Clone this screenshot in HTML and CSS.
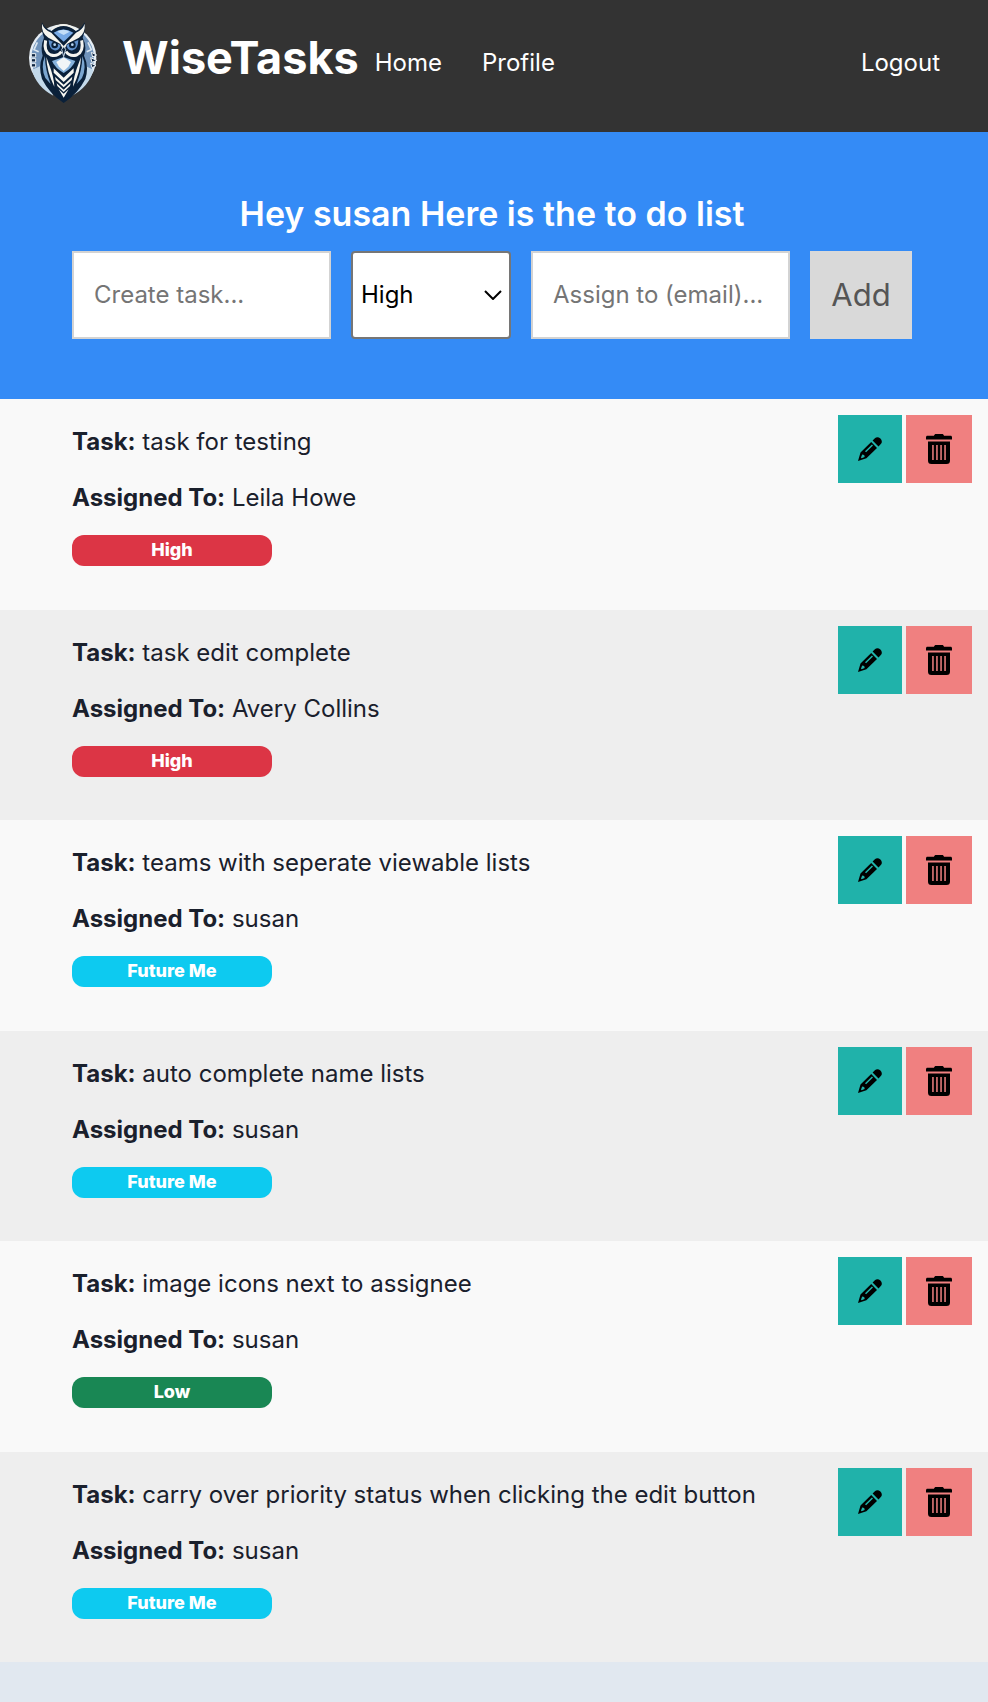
FILE: index.html
```html
<!DOCTYPE html>
<html lang="en">
<head>
<meta charset="utf-8">
<title>WiseTasks</title>
<link rel="stylesheet" href="styles.css">
</head>
<body>
<svg class="sprite" aria-hidden="true">
  <symbol id="pencil" viewBox="0 0 24 24">
    <path fill-rule="evenodd" d="M14.600 3.600 16.900 1.300C18.300-.2 20.600-.2 22.400 1.600 24.200 3.400 24.300 5.600 22.800 7.100L20.500 9.400ZM13.200 5 19 10.900 8.400 21.300 0 24 2.500 15.500ZM4.200 17.600 3 20.600 3.600 21.200 6.700 20 6.200 18.100ZM7 14.200 8.100 15.300 15 8.500 13.900 7.400Z"/>
  </symbol>
  <symbol id="trash" viewBox="0 0 26 30">
    <path fill-rule="evenodd" d="M8 1.800C8.300.6 9 0 10 0H16C17 0 17.700.6 18 1.800H24.500C25.500 1.800 26 2.400 26 3.300V5.500H0V3.300C0 2.400.5 1.800 1.500 1.800ZM2 7.500H24V26.500C24 29 23 30 20.500 30H5.500C3 30 2 29 2 26.500ZM6.200 11V26H7.700V11ZM10.200 11V26H11.700V11ZM14.300 11V26H15.800V11ZM18.300 11V26H19.800V11Z"/>
  </symbol>
</svg>

<header class="navbar">
  <a class="brand" href="#">
    <svg class="brand-logo" viewBox="24 34 210 249" aria-hidden="true">
      <circle cx="128" cy="145" r="101" fill="#e6eef5"/>
      <circle cx="128" cy="145" r="94" fill="#6f93bb"/>
      <path d="M36 180Q48 230 100 258L80 215 60 170Z" fill="#c3d9ea"/>
      <path d="M220 180Q208 230 156 258L178 215 198 170Z" fill="#c3d9ea"/>
      <path d="M34 132h13v10H34zM34 147h13v10H34zM34 162h13v10H34zM214 128l16 8-12 6zM212 144l18 8-14 6zM212 160l16 8-12 6z" fill="#0d2440" stroke="#eef4f8" stroke-width="3"/>
      <path d="M52 98 42 120 56 126M204 98 214 120 200 126" fill="none" stroke="#dbe7f1" stroke-width="5"/>
      <path d="M66 38Q62 60 72 84Q60 110 68 138Q54 170 66 208Q88 252 131 280Q174 252 196 208Q208 170 192 138Q202 110 188 84Q198 60 194 38Q184 56 168 64Q130 30 94 64Q74 56 66 38Z" fill="#0a2039"/>
      <path d="M92 62Q130 30 170 62" fill="none" stroke="#f2f2ec" stroke-width="6"/>
      <path d="M101 69Q130 50 160 69L131 96Z" fill="#78aae6"/>
      <path d="M112 66Q130 55 149 66L131 76Z" fill="#c4def8"/>
      <path d="M66 42Q73 61 94 69L131 109 168 69Q188 60 194 42Q197 69 177 84L141 103 131 124 121 103 85 84Q63 69 66 42Z" fill="#f5f4ee"/>
      <path d="M77 92Q70 126 92 136Q112 142 124 126M185 92Q192 126 170 136Q150 142 138 126" fill="none" stroke="#f4f4f0" stroke-width="9"/>
      <path d="M86 91 122 106Q119 124 103 122Q87 119 86 91ZM175 91 139 106Q142 124 158 122Q174 119 175 91Z" fill="#5e8fcb"/>
      <circle cx="104" cy="106" r="10" fill="#0a2039"/><circle cx="157" cy="106" r="10" fill="#0a2039"/>
      <circle cx="104" cy="105" r="4" fill="#b9d7f4"/><circle cx="157" cy="105" r="4" fill="#b9d7f4"/>
      <path d="M125 119 131 111 137 119 131 141Z" fill="#0a2039" stroke="#c6d8e8" stroke-width="3"/>
      <path d="M131 142 166 154Q157 175 131 190Q105 175 96 154Z" fill="#86b2dc"/>
      <path d="M131 143 153 157 145 171 131 184 117 171 109 157Z" fill="#f1f5f7"/>
      <path d="M75 139Q61 172 76 205L92 223Q75 178 75 139ZM187 139Q201 172 186 205L170 223Q187 178 187 139Z" fill="#7ba6d0"/>
      <path d="M79 142Q80 185 103 231Q102 202 87 164ZM183 142Q182 185 159 231Q160 202 175 164Z" fill="#f4f4ef"/>
      <path d="M101 176 131 204 161 176V189L131 217 101 189ZM105 201 131 225 157 201 155 211 131 233 107 211ZM110 221 131 240 152 221 150 229 131 247 112 229ZM116 239 131 252 146 239 131 264Z" fill="#f7f7f2"/>
    </svg>
    <span class="brand-name">WiseTasks</span>
  </a>
  <nav class="nav">
    <a class="nav-link" href="#">Home</a>
    <a class="nav-link" href="#">Profile</a>
    <a class="nav-link nav-logout" href="#">Logout</a>
  </nav>
</header>

<main>
  <section class="hero">
    <h1 class="hero-title">Hey susan Here is the to do list</h1>
    <form class="task-form">
      <input class="field" type="text" placeholder="Create task..." aria-label="Create task">
      <span class="select-wrap">
        <select class="select" aria-label="Priority">
          <option>High</option>
          <option>Low</option>
          <option>Future Me</option>
        </select>
        <svg class="chevron" viewBox="0 0 18 10" aria-hidden="true"><path d="M1 1 9 9 17 1"/></svg>
      </span>
      <input class="field" type="email" placeholder="Assign to (email)..." aria-label="Assign to (email)">
      <button class="add" type="button">Add</button>
    </form>
  </section>

  <ul class="tasks">
    <li class="task">
      <div class="task-body">
        <p class="line"><strong>Task:</strong> task for testing</p>
        <p class="line"><strong>Assigned To:</strong> Leila Howe</p>
        <span class="badge badge-high">High</span>
      </div>
      <div class="actions">
        <button class="edit" type="button" aria-label="Edit"><svg class="pencil"><use href="#pencil"/></svg></button>
        <button class="delete" type="button" aria-label="Delete"><svg class="trash"><use href="#trash"/></svg></button>
      </div>
    </li>
    <li class="task">
      <div class="task-body">
        <p class="line"><strong>Task:</strong> task edit complete</p>
        <p class="line"><strong>Assigned To:</strong> Avery Collins</p>
        <span class="badge badge-high">High</span>
      </div>
      <div class="actions">
        <button class="edit" type="button" aria-label="Edit"><svg class="pencil"><use href="#pencil"/></svg></button>
        <button class="delete" type="button" aria-label="Delete"><svg class="trash"><use href="#trash"/></svg></button>
      </div>
    </li>
    <li class="task">
      <div class="task-body">
        <p class="line"><strong>Task:</strong> teams with seperate viewable lists</p>
        <p class="line"><strong>Assigned To:</strong> susan</p>
        <span class="badge badge-future">Future Me</span>
      </div>
      <div class="actions">
        <button class="edit" type="button" aria-label="Edit"><svg class="pencil"><use href="#pencil"/></svg></button>
        <button class="delete" type="button" aria-label="Delete"><svg class="trash"><use href="#trash"/></svg></button>
      </div>
    </li>
    <li class="task">
      <div class="task-body">
        <p class="line"><strong>Task:</strong> auto complete name lists</p>
        <p class="line"><strong>Assigned To:</strong> susan</p>
        <span class="badge badge-future">Future Me</span>
      </div>
      <div class="actions">
        <button class="edit" type="button" aria-label="Edit"><svg class="pencil"><use href="#pencil"/></svg></button>
        <button class="delete" type="button" aria-label="Delete"><svg class="trash"><use href="#trash"/></svg></button>
      </div>
    </li>
    <li class="task">
      <div class="task-body">
        <p class="line"><strong>Task:</strong> image icons next to assignee</p>
        <p class="line"><strong>Assigned To:</strong> susan</p>
        <span class="badge badge-low">Low</span>
      </div>
      <div class="actions">
        <button class="edit" type="button" aria-label="Edit"><svg class="pencil"><use href="#pencil"/></svg></button>
        <button class="delete" type="button" aria-label="Delete"><svg class="trash"><use href="#trash"/></svg></button>
      </div>
    </li>
    <li class="task">
      <div class="task-body">
        <p class="line"><strong>Task:</strong> carry over priority status when clicking the edit button</p>
        <p class="line"><strong>Assigned To:</strong> susan</p>
        <span class="badge badge-future">Future Me</span>
      </div>
      <div class="actions">
        <button class="edit" type="button" aria-label="Edit"><svg class="pencil"><use href="#pencil"/></svg></button>
        <button class="delete" type="button" aria-label="Delete"><svg class="trash"><use href="#trash"/></svg></button>
      </div>
    </li>
  </ul>
</main>
</body>
</html>
```

FILE: styles.css
```css
* { box-sizing: border-box; }

body {
  margin: 0;
  background: #e1e8f0;
  color: #1a202c;
  font-family: Inter, "Liberation Sans", sans-serif;
  font-size: 24px;
  line-height: 32px;
}

button, input, select { font: inherit; }

.sprite { position: absolute; width: 0; height: 0; }

.navbar {
  display: flex;
  align-items: flex-start;
  gap: 16px;
  padding: 21px 48px 28px 28px;
  background: #333;
}

.brand {
  display: flex;
  gap: 24px;
  color: #fff;
  text-decoration: none;
}

.brand-logo { width: 70px; height: 83px; }

.brand-name {
  padding-top: 7px;
  font-size: 45px;
  font-weight: 700;
  line-height: 60px;
}

.nav {
  display: flex;
  flex: 1;
  gap: 40px;
  padding-top: 26px;
}

.nav-link { color: #fff; text-decoration: none; }
.nav-logout { margin-left: auto; }

.hero {
  padding: 56px 76px 60px 72px;
  background: #348bf6;
}

.hero-title {
  margin: 0;
  padding: 2px 0 13px;
  color: #fff;
  font-size: 34px;
  font-weight: 600;
  line-height: 48px;
  text-align: center;
}

.task-form { display: flex; gap: 20px; height: 88px; }

.field {
  flex: 1;
  min-width: 0;
  padding: 20px;
  border: 2px solid #d3d3d3;
  border-radius: 0;
  background: #fff;
}

.field::placeholder { color: #757575; opacity: 1; }

.select-wrap { position: relative; width: 160px; }

.select {
  width: 100%;
  height: 100%;
  padding: 0 8px;
  border: 2px solid #767676;
  border-radius: 4px;
  background: #fff;
  color: #000;
  appearance: none;
}

.chevron {
  position: absolute;
  top: 39px;
  right: 9px;
  width: 18px;
  height: 10px;
  fill: none;
  stroke: #000;
  stroke-width: 2;
  pointer-events: none;
}

.add {
  width: 102px;
  padding: 0;
  border: 0;
  background: #d9d9d9;
  color: #555;
  font-size: 31px;
}

.tasks { margin: 0; padding: 0; list-style: none; }

.task {
  display: flex;
  justify-content: space-between;
  padding: 16px 16px 44px 72px;
  background: #f9f9f9;
}

.task:nth-child(even) { padding-bottom: 43px; background: #eee; }

.task-body { padding-top: 11px; }

.line { margin: 0 0 24px; }
.line + .line { margin-bottom: 21px; }

.badge {
  display: block;
  width: 200px;
  padding-bottom: 1px;
  border-radius: 12px;
  color: #fff;
  font-size: 18px;
  font-weight: 800;
  line-height: 30px;
  text-align: center;
}

.badge-high { background: #dc3545; }
.badge-future { background: #0dcaf0; }
.badge-low { background: #198754; }

.actions { display: flex; gap: 4px; height: 68px; }

.edit, .delete {
  display: grid;
  place-items: center;
  padding: 0;
  border: 0;
}

.edit { width: 64px; background: #20b2aa; }
.delete { width: 66px; background: #f08080; }
.pencil { width: 24px; height: 24px; }
.trash { width: 26px; height: 30px; }
```
